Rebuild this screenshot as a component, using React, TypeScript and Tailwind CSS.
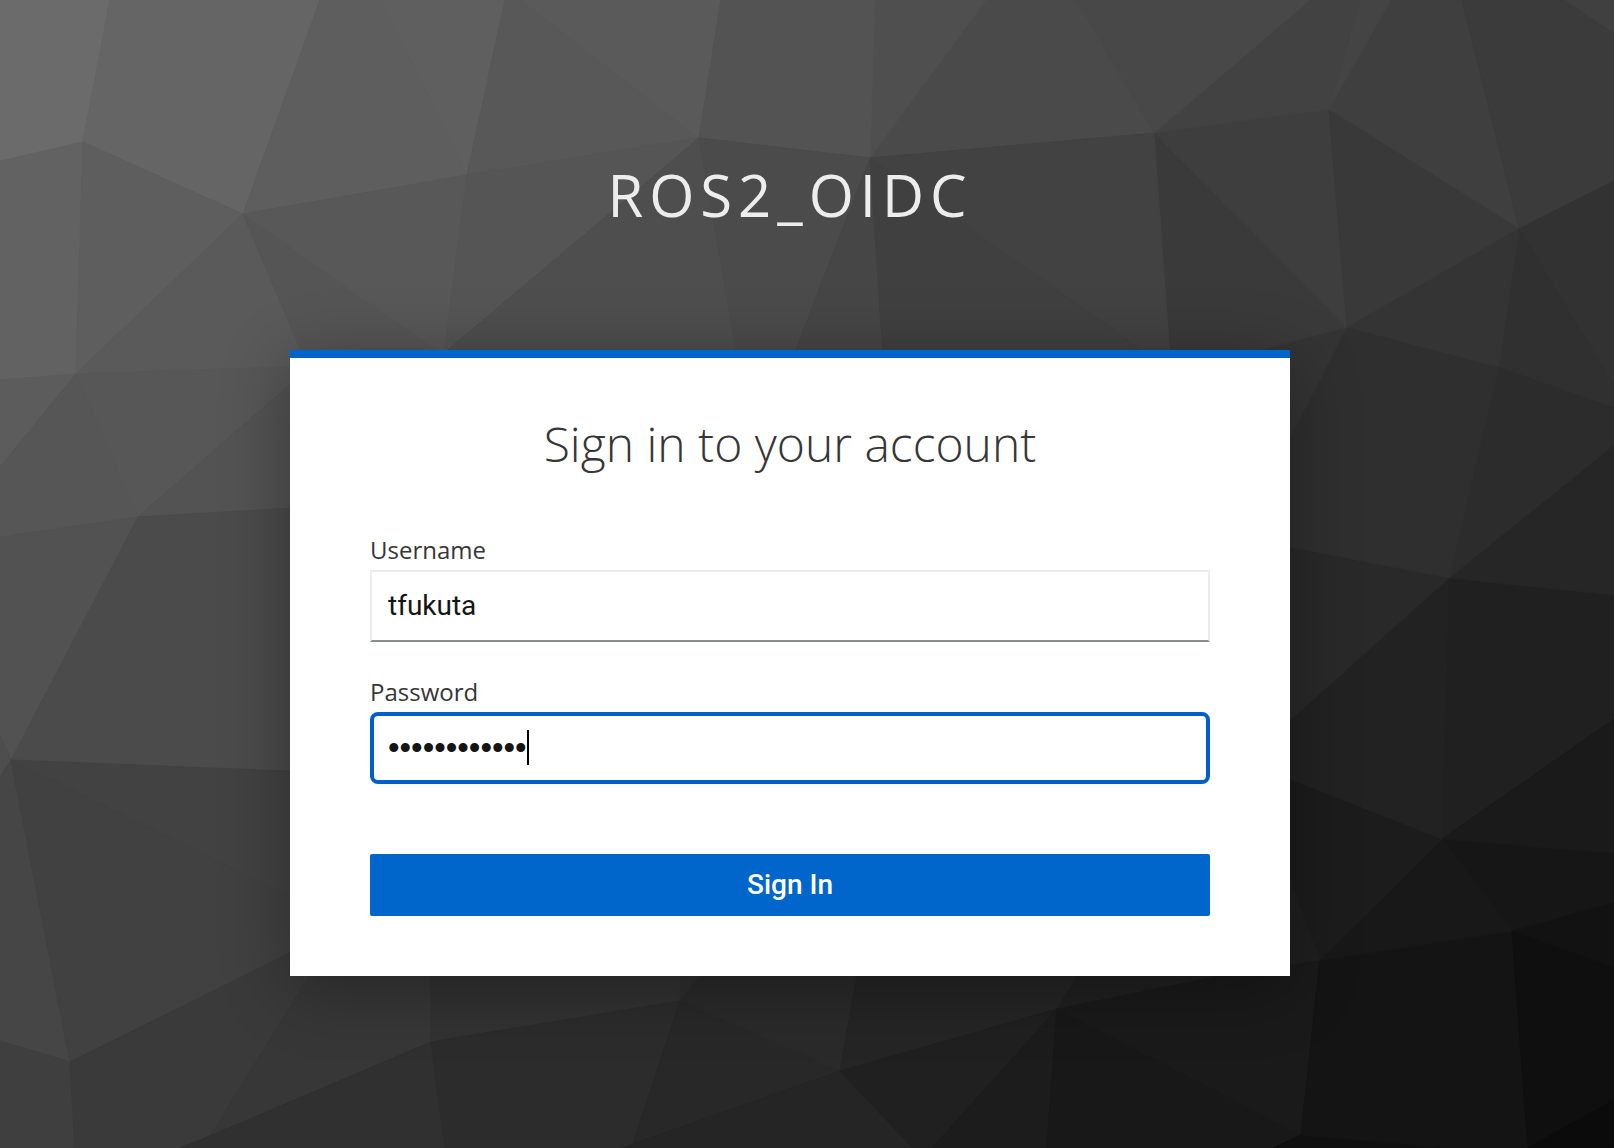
import React, { useState } from "react";

const facets: [string, string][] = [
  ["0,0 110,0 83,142 0,161", "#6b6b6b"],
  ["110,0 320,0 243,214 83,142", "#656565"],
  ["320,0 382,0 467,175 243,214", "#5e5e5e"],
  ["382,0 505,0 467,175", "#5f5f5f"],
  ["0,161 83,142 76,374 0,380", "#626262"],
  ["83,142 243,214 76,374", "#5e5e5e"],
  ["76,374 243,214 308,367", "#5a5a5a"],
  ["243,214 446,357 308,367", "#555555"],
  ["243,214 467,175 446,357", "#585858"],
  ["505,0 521,0 699,138 467,175", "#585858"],
  ["521,0 721,0 699,138", "#5a5a5a"],
  ["467,175 699,138 444,353", "#555555"],
  ["0,380 76,374 0,467", "#5c5c5c"],
  ["0,467 76,374 138,517 0,537", "#565656"],
  ["76,374 310,366 310,367 138,517", "#575757"],
  ["138,517 310,367 310,507", "#535353"],
  ["0,537 138,517 11,760 0,735", "#525252"],
  ["0,735 11,760 0,777", "#4e4e4e"],
  ["138,517 310,507 310,772 11,760", "#4b4b4b"],
  ["0,777 11,760 70,1062 0,1041", "#464646"],
  ["11,760 310,772 310,907", "#424242"],
  ["11,760 310,907 310,943 70,1062", "#414141"],
  ["0,1041 70,1062 75,1148 0,1148", "#3f3f3f"],
  ["70,1062 310,943 330,943 210,1136 180,1148 75,1148", "#3a3a3a"],
  ["210,1136 330,943 430,943 431,1042", "#373737"],
  ["210,1136 431,1042 445,1148 213,1148", "#303030"],
  ["180,1148 210,1136 213,1148", "#303030"],
  ["431,1042 430,943 682,943 680,1001", "#323232"],
  ["431,1042 680,1001 633,1144 623,1148 445,1148", "#2c2c2c"],
  ["680,1001 682,943 725,943", "#2e2e2e"],
  ["680,1001 840,1071 633,1144", "#282828"],
  ["680,1001 725,943 863,943 840,1071", "#2a2a2a"],
  ["633,1144 840,1071 913,1148 623,1148", "#252525"],
  ["840,1071 863,943 1098,943 1057,1009", "#252525"],
  ["840,1071 1057,1009 932,1148 913,1148", "#202020"],
  ["1057,1009 1047,1148 932,1148", "#1c1c1c"],
  ["1057,1009 1098,943 1290,943 1290,965 1220,976", "#202020"],
  ["1057,1009 1301,1135 1273,1148 1047,1148", "#181818"],
  ["1057,1009 1220,976 1320,960 1301,1135", "#1a1a1a"],
  ["1301,1135 1449,1148 1273,1148", "#101010"],
  ["1320,960 1512,931 1528,1148 1449,1148 1301,1135", "#141414"],
  ["1512,931 1614,967 1614,1100 1528,1148", "#0f0f0f"],
  ["1614,1100 1614,1148 1528,1148", "#0b0b0b"],
  ["1512,931 1614,902 1614,967", "#121212"],
  ["1442,839 1614,853 1614,902 1512,931", "#161616"],
  ["1442,839 1512,931 1320,960", "#181818"],
  ["1442,839 1320,960 1270,827 1270,771", "#1c1c1c"],
  ["1270,827 1320,960 1270,968", "#1f1f1f"],
  ["1442,839 1449,578 1614,595 1614,719", "#202020"],
  ["1442,839 1270,771 1270,738 1449,578", "#222222"],
  ["1442,839 1614,719 1614,853", "#1a1a1a"],
  ["1449,578 1270,738 1270,543", "#292929"],
  ["1449,578 1614,445 1614,595", "#262626"],
  ["1449,578 1499,367 1614,407 1614,445", "#2c2c2c"],
  ["1449,578 1270,543 1270,477 1347,327 1499,367", "#2f2f2f"],
  ["1499,367 1519,228 1614,385 1614,407", "#303030"],
  ["1519,228 1614,180 1614,385", "#323232"],
  ["1519,228 1499,367 1347,327", "#343434"],
  ["1347,327 1270,477 1230,358", "#343434"],
  ["1347,327 1154,133 1171,370 1230,358", "#3a3a3a"],
  ["1347,327 1154,133 1329,109", "#3e3e3e"],
  ["1347,327 1329,109 1519,228", "#393939"],
  ["1329,109 1391,0 1462,0 1519,228", "#3f3f3f"],
  ["1329,109 1360,0 1391,0", "#444444"],
  ["1519,228 1462,0 1565,0 1614,33 1614,180", "#3b3b3b"],
  ["1565,0 1614,0 1614,33", "#404040"],
  ["1154,133 1310,0 1360,0 1329,109", "#424242"],
  ["1154,133 1076,0 1310,0", "#484848"],
  ["870,158 986,0 1076,0 1154,133", "#4a4a4a"],
  ["870,158 875,0 986,0", "#4f4f4f"],
  ["870,158 699,138 721,0 875,0", "#535353"],
  ["699,138 740,370 424,370", "#4e4e4e"],
  ["699,138 870,158 788,370 740,370", "#4b4b4b"],
  ["870,158 884,370 788,370", "#464646"],
  ["870,158 1170,370 884,370", "#404040"],
  ["870,158 1154,133 1171,370", "#424242"],
];

function Backdrop() {
  return (
    <svg
      aria-hidden="true"
      className="absolute inset-0 h-full w-full"
      viewBox="0 0 1614 1148"
      preserveAspectRatio="xMidYMid slice"
    >
      {facets.map(([points, color]) => (
        <polygon key={points} points={points} fill={color} stroke={color} strokeWidth="1" strokeLinejoin="round" />
      ))}
    </svg>
  );
}

export default function App() {
  const [username, setUsername] = useState("tfukuta");
  const [password, setPassword] = useState("correcthorse");

  return (
    <div className="relative min-h-screen overflow-hidden bg-[#333333] pr-[34px] font-['Open_Sans',sans-serif]">
      <Backdrop />
      <div className="relative mx-auto flex w-full max-w-[1000px] flex-col">
        <header className="pt-40 pb-30 text-center text-[58px] leading-[70px] tracking-[6px] text-[#ededed] uppercase">
          ros2_oidc
        </header>
        <main className="border-t-8 border-[#0066cc] bg-white px-20 pt-14 pb-15 shadow-[0_12px_64px_rgba(0,0,0,0.33)]">
          <h1 className="text-center text-[48px] leading-[60px] font-light text-[#363636]">
            Sign in to your account
          </h1>
          <form className="mt-[58px] flex flex-col" onSubmit={(e) => e.preventDefault()}>
            <label htmlFor="username" className="pb-0.5 text-2xl leading-9 text-[#363636]">
              Username
            </label>
            <input
              id="username"
              type="text"
              value={username}
              onChange={(e) => setUsername(e.target.value)}
              className="h-18 w-full border-2 border-[#ededed] border-b-[#8a8d90] bg-white px-4 pb-0.5 font-[Roboto,sans-serif] text-[28px] text-[#151515] outline-none"
            />
            <label htmlFor="password" className="mt-8 pb-0.5 text-2xl leading-9 text-[#363636]">
              Password
            </label>
            <div className="relative">
              <input
                id="password"
                type="password"
                value={password}
                onChange={(e) => setPassword(e.target.value)}
                className="h-18 w-full rounded-lg border-4 border-[#0060c8] bg-white px-3.5 font-['Liberation_Sans',sans-serif] text-[33px] text-[#151515] caret-transparent outline-none"
              />
              <span aria-hidden="true" className="absolute top-4.5 left-[157px] h-[35px] w-0.5 bg-black" />
            </div>
            <button
              type="submit"
              className="mt-[70px] h-[62px] w-full rounded-xs bg-[#0066cc] font-[Roboto,sans-serif] text-[28px] font-medium text-white"
            >
              Sign In
            </button>
          </form>
        </main>
      </div>
    </div>
  );
}
